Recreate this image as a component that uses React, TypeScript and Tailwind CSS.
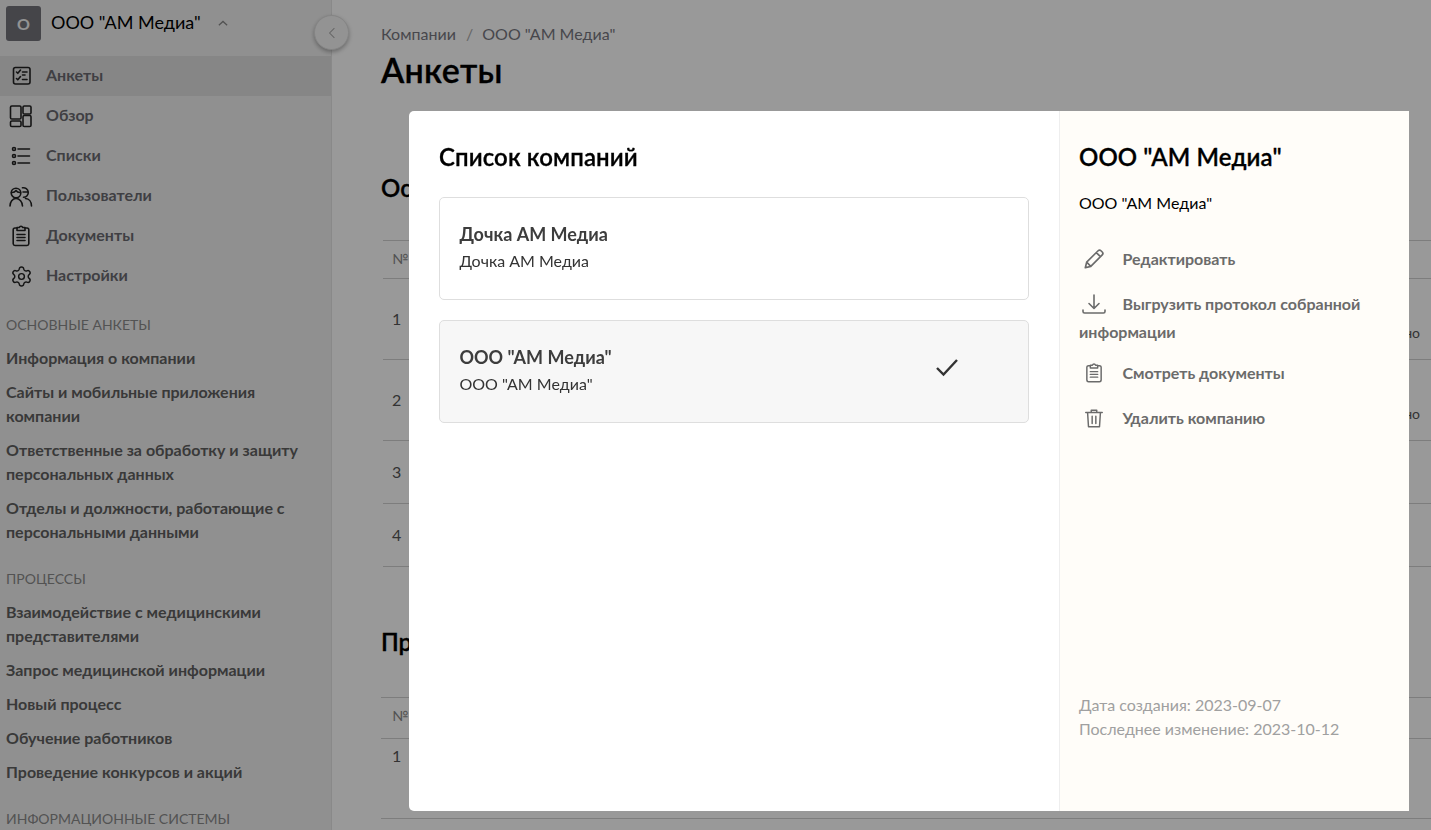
import React from "react";
import { Settings } from "lucide-react";

const IconBase = ({ children, className = "", sw = 1.6 }: { children: React.ReactNode; className?: string; sw?: number }) => (
  <svg viewBox="0 0 24 24" fill="none" stroke="currentColor" strokeWidth={sw} strokeLinecap="round" strokeLinejoin="round" className={className}>
    {children}
  </svg>
);

const Survey = () => (
  <IconBase className="w-6 h-6 text-[#222]">
    <rect x="4.5" y="3.500" width="16.500" height="16.500" rx="2" />
    <path d="M7.500 8l1.300 1.300L11.500 6M13.500 8h4.500M7.500 14.500l1.300 1.300 2.700-3.300M13.500 15.500h4.500M13.500 11h2.500" />
  </IconBase>
);
const Overview = () => (
  <IconBase className="w-6 h-6 text-[#222]">
    <rect x="1.500" y="2" width="10.500" height="13" rx="1.300" />
    <rect x="14" y="2" width="8" height="8" rx="1.300" />
    <rect x="1.500" y="17" width="10.500" height="5.500" rx="1.300" />
    <rect x="14" y="11.500" width="8" height="11" rx="1.300" />
  </IconBase>
);
const ListIcon = () => (
  <IconBase className="w-6 h-6 text-[#222]">
    <circle cx="5" cy="5" r="1.500" />
    <circle cx="5" cy="12" r="1.500" />
    <circle cx="5" cy="19" r="1.500" />
    <path d="M9 5h11.500M9 12h11.500M9 19h11.500" />
  </IconBase>
);
const Users = () => (
  <IconBase className="w-6 h-6 text-[#222]">
    <circle cx="7" cy="9" r="4.800" />
    <path d="M2.500 8.500c2 .2 3.500-.5 4.500-2 1 1.500 2.500 2.200 4.500 2" />
    <path d="M1 22c0-4.200 2.500-7.500 6-7.500s6.500 3.300 6.500 7.500" />
    <path d="M13.500 3.800a4.800 4.800 0 1 1 1 9.500M14 8h4.500M16.500 14.500c3.500.2 6 3.300 6 7.500" />
  </IconBase>
);
const Doc = ({ className = "w-6 h-6 text-[#222]" }: { className?: string }) => (
  <IconBase className={className}>
    <path d="M8 4H6a1.800 1.800 0 0 0-1.800 1.800v14A1.800 1.800 0 0 0 6 21.500h12a1.800 1.800 0 0 0 1.800-1.700V5.800A1.800 1.800 0 0 0 18 4h-2" />
    <path d="M8 6.500V3.500h2.300a1.800 1.800 0 0 1 3.400 0H16v3z" />
    <path d="M8 10.500h8M8 13.500h8M8 16.500h8" />
  </IconBase>
);

const nav = [
  { label: "Анкеты", icon: <Survey />, active: true },
  { label: "Обзор", icon: <Overview /> },
  { label: "Списки", icon: <ListIcon /> },
  { label: "Пользователи", icon: <Users /> },
  { label: "Документы", icon: <Doc /> },
  { label: "Настройки", icon: <Settings className="w-[23px] h-[23px] text-[#222]" strokeWidth={1.5} /> },
];

const Section = ({ title, items }: { title: string; items: string[] }) => (
  <div className="mb-[23px]">
    <div className="text-[14px] leading-[24px] text-[#8a8a8a] mb-[9px]">{title}</div>
    <div className="flex flex-col gap-[10px]">
      {items.map((t) => (
        <div key={t} className="text-[16px] leading-[24px] font-bold text-[#606060]">{t}</div>
      ))}
    </div>
  </div>
);

const Row = ({ n, h, tail }: { n?: string; h: string; tail?: string }) => (
  <div className={`${h} border-b border-[#d0d0d0] flex items-center pl-[9px] pr-[11px] justify-between text-[16px] text-[#555]`}>
    <span>{n}</span>
    {tail && <span className="text-[14px] mt-[26px] text-[#555]">{tail}</span>}
  </div>
);

const Action = ({ icon, children }: { icon: React.ReactNode; children: React.ReactNode }) => (
  <div className="text-[16px] leading-[28px] font-bold text-[#6b6b6b]">
    <span className="inline-flex w-[43.5px] justify-start align-middle pl-[4px] -mt-[4px]">{icon}</span>
    {children}
  </div>
);

export default function App() {
  return (
    <div className="relative h-[830px] w-[1431px] overflow-hidden bg-white flex font-['Lato',sans-serif]">
      {/* sidebar */}
      <aside className="relative w-[332px] shrink-0 h-full bg-[#f1f1f1] border-r border-[#e4e4e4]">
        <div className="flex items-start h-[47px] pt-[6px] pl-[6px]">
          <div className="w-[35px] h-[35px] rounded-[3px] bg-[#73737b] text-[#f5f5f5] font-bold text-[16px] flex items-center justify-center">О</div>
          <span className="ml-[10px] text-[18px] leading-[32px] text-black">ООО "АМ Медиа"</span>
          <svg viewBox="0 0 12 8" className="ml-[17px] mt-[14px] w-[10px] h-[7px] text-[#888]" fill="none" stroke="currentColor" strokeWidth="1.500"><path d="M1 6l5-4.500L11 6" /></svg>
        </div>
        <nav className="mt-[9px]">
          {nav.map((n) => (
            <div key={n.label} className={`flex items-center h-[40px] ${n.active ? "bg-[#dfdfdf]" : ""}`}>
              <span className="w-[46px] flex justify-center pr-[4px]">{n.icon}</span>
              <span className="text-[16px] leading-[24px] pb-[2px] font-bold text-[#6a6a70]">{n.label}</span>
            </div>
          ))}
        </nav>
        <div className="pl-[6px] pr-[20px] mt-[17px]">
          <Section title="ОСНОВНЫЕ АНКЕТЫ" items={["Информация о компании", "Сайты и мобильные приложения компании", "Ответственные за обработку и защиту персональных данных", "Отделы и должности, работающие с персональными данными"]} />
          <Section title="ПРОЦЕССЫ" items={["Взаимодействие с медицинскими представителями", "Запрос медицинской информации", "Новый процесс", "Обучение работников", "Проведение конкурсов и акций"]} />
          <Section title="ИНФОРМАЦИОННЫЕ СИСТЕМЫ" items={[]} />
        </div>
        <button className="absolute right-[-18px] top-[15px] w-[35px] h-[35px] rounded-full bg-[#f6f6f6] border border-[#ddd] shadow-[0_2px_4px_rgba(0,0,0,0.3)] flex items-center justify-center text-[#aaa]">
          <svg viewBox="0 0 10 14" className="w-[8px] h-[12px]" fill="none" stroke="currentColor" strokeWidth="1.300"><path d="M8 1L2 7l6 6" /></svg>
        </button>
      </aside>

      {/* main */}
      <main className="flex-1 pl-[49px]">
        <div className="pt-[24px] text-[16px] leading-[20px] text-[#77777f]">
          Компании <span className="mx-[6px] text-[#aaa]">/</span><span className="ml-[-1px]"> ООО "АМ Медиа"</span>
        </div>
        <h1 className="text-[34px] leading-[44px] mt-[4px] font-semibold tracking-[0.3px] [-webkit-text-stroke:0.3px_black] text-black">Анкеты</h1>
        <h2 className="mt-[81px] text-[24px] leading-[30px] font-semibold [-webkit-text-stroke:0.3px_black] text-black">Основные анкеты</h2>
        <div className="mt-[37px] ml-[2px] border-t border-[#d0d0d0]">
          <div className="h-[38px] border-b border-[#d0d0d0] flex items-center pl-[9px] pb-[2px] text-[14px] text-[#888]">№</div>
          <Row n="1" h="h-[81px]" tail="но" />
          <Row n="2" h="h-[81px]" tail="но" />
          <Row n="3" h="h-[63px]" />
          <Row n="4" h="h-[63px]" />
        </div>
        <h2 className="mt-[60px] text-[24px] leading-[30px] font-semibold [-webkit-text-stroke:0.3px_black] text-black">Процессы</h2>
        <div className="mt-[40px] border-t border-[#d0d0d0]">
          <div className="h-[41px] border-b border-[#d0d0d0] flex items-center pl-[11px] pb-[6px] text-[14px] text-[#888]">№</div>
          <div className="h-[80px] border-b border-[#d0d0d0] pl-[11px] pt-[5px] text-[16px] text-[#555]">1</div>
        </div>
      </main>

      {/* overlay */}
      <div className="fixed inset-0 bg-black/40">
        <div className="absolute left-[409px] top-[111px] w-[1000px] h-[700px] rounded-l-[5px] overflow-hidden flex bg-white">
          <div className="w-[650px] shrink-0 pl-[30px] pr-[30px] pt-[29px]">
            <div className="text-[24px] leading-[34px] font-semibold tracking-[0.1px] [-webkit-text-stroke:0.3px_black] text-black">Список компаний</div>
            <div className="mt-[23px] h-[103px] rounded-[5px] border border-[#dedede] pl-[19.5px] pt-[22px]">
              <div className="text-[18px] leading-[28px] font-bold text-[#3d3d3d]">Дочка АМ Медиа</div>
              <div className="mt-[1px] text-[16px] leading-[24px] text-[#333]">Дочка АМ Медиа</div>
            </div>
            <div className="mt-[20px] h-[103px] rounded-[5px] border border-[#dedede] bg-[#f7f7f7] pl-[19.5px] pt-[22px] flex justify-between">
              <div>
                <div className="text-[18px] leading-[28px] font-bold text-[#3d3d3d]">ООО "АМ Медиа"</div>
                <div className="mt-[1px] text-[16px] leading-[24px] text-[#333]">ООО "АМ Медиа"</div>
              </div>
              <svg viewBox="0 0 24 24" className="w-[24px] h-[24px] mr-[69px] mt-[12px] text-[#333]" fill="none" stroke="currentColor" strokeWidth="2.400"><path d="M2 13l6.500 6.500L22 5" /></svg>
            </div>
          </div>
          <div className="flex-1 bg-[#fffdf9] border-l border-[#eee] pl-[19px] pr-[20px] pt-[29px] flex flex-col">
            <div className="text-[24px] leading-[34px] font-semibold tracking-[0.1px] [-webkit-text-stroke:0.3px_black] text-black">ООО "АМ Медиа"</div>
            <div className="mt-[17px] text-[16px] leading-[24px] text-black">ООО "АМ Медиа"</div>
            <div className="mt-[30px] flex flex-col gap-[17px]">
              <Action icon={
                <IconBase sw={1.8} className="w-[22px] h-[22px]"><path d="M2.500 21.500l1.500-6L16.500 3a2.200 2.200 0 0 1 3.100 0l1.400 1.400a2.200 2.200 0 0 1 0 3.100L8.500 20zM4 15.500l4.500 4.500M14.500 5l4.500 4.500" /></IconBase>
              }>Редактировать</Action>
              <Action icon={
                <IconBase className="w-[26px] h-[24px] -ml-[2px]"><path d="M12 3v13M7 11.500l5 5 5-5M1 18v1.500a1.500 1.500 0 0 0 1.500 1.500h19a1.500 1.500 0 0 0 1.500-1.500V18" /></IconBase>
              }>Выгрузить протокол собранной информации</Action>
            </div>
            <div className="mt-[13px] flex flex-col gap-[17px]">
              <Action icon={<Doc className="w-[22px] h-[22px]" />}>Смотреть документы</Action>
              <Action icon={
                <IconBase className="w-[22px] h-[22px]"><path d="M3 6h18M9 6V3.500h6V6M5 6l1 15.500h12L19 6M10 10v8M14 10v8" /></IconBase>
              }>Удалить компанию</Action>
            </div>
            <div className="mt-auto mb-[70px] text-[16px] leading-[24px] text-[#a0a0a0]">
              <div>Дата создания: 2023-09-07</div>
              <div>Последнее изменение: 2023-10-12</div>
            </div>
          </div>
        </div>
      </div>
    </div>
  );
}
